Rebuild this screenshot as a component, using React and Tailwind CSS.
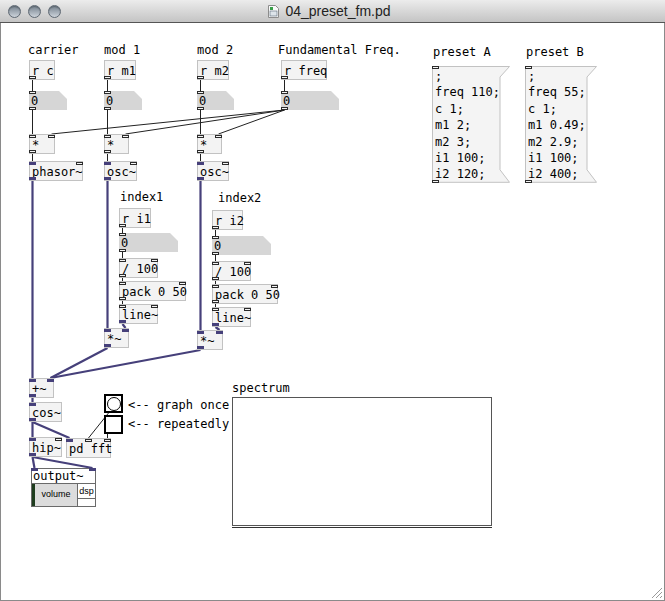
import React from "react";

// Pd patch window: node positions are the content of the canvas, so they come from data
const TOP = 23;
const SIG = "#46407a";

const objects = [
  { x: 29, y: 60, w: 26, t: "r c", ins: [], outs: ["c"] },
  { x: 29, y: 134, w: 26, t: "*", ins: ["c", "c"], outs: ["c"] },
  { x: 29, y: 161, w: 54, t: "phasor~", ins: ["s", "c"], outs: ["s"] },
  { x: 104, y: 60, w: 32, t: "r m1", ins: [], outs: ["c"] },
  { x: 104, y: 134, w: 25, t: "*", ins: ["c", "c"], outs: ["c"] },
  { x: 104, y: 161, w: 33, t: "osc~", ins: ["s", "c"], outs: ["s"] },
  { x: 197, y: 60, w: 32, t: "r m2", ins: [], outs: ["c"] },
  { x: 197, y: 134, w: 25, t: "*", ins: ["c", "c"], outs: ["c"] },
  { x: 197, y: 161, w: 32, t: "osc~", ins: ["s", "c"], outs: ["s"] },
  { x: 281, y: 60, w: 46, t: "r freq", ins: [], outs: ["c"] },
  { x: 119, y: 208, w: 32, t: "r i1", ins: [], outs: ["c"] },
  { x: 119, y: 258, w: 39, t: "/ 100", ins: ["c", "c"], outs: ["c"] },
  { x: 119, y: 281, w: 67, t: "pack 0 50", ins: ["c", "c"], outs: ["c"] },
  { x: 119, y: 304, w: 39, t: "line~", ins: ["c", "c"], outs: ["s"] },
  { x: 104, y: 328, w: 25, t: "*~", ins: ["s", "s"], outs: ["s"] },
  { x: 212, y: 210, w: 31, t: "r i2", ins: [], outs: ["c"] },
  { x: 212, y: 261, w: 39, t: "/ 100", ins: ["c", "c"], outs: ["c"] },
  { x: 212, y: 284, w: 66, t: "pack 0 50", ins: ["c", "c"], outs: ["c"] },
  { x: 212, y: 307, w: 39, t: "line~", ins: ["c", "c"], outs: ["s"] },
  { x: 197, y: 330, w: 26, t: "*~", ins: ["s", "s"], outs: ["s"] },
  { x: 29, y: 378, w: 25, t: "+~", ins: ["s", "s"], outs: ["s"] },
  { x: 29, y: 402, w: 33, t: "cos~", ins: ["s"], outs: ["s"] },
  { x: 29, y: 437, w: 33, t: "hip~", ins: ["s", "c"], outs: ["s"] },
  { x: 66, y: 438, w: 45, t: "pd fft", ins: ["s", "c", "c"], outs: [] },
];

const numbers = [
  { x: 29, y: 91, w: 38 },
  { x: 104, y: 91, w: 38 },
  { x: 197, y: 91, w: 37 },
  { x: 281, y: 91, w: 58 },
  { x: 119, y: 233, w: 59 },
  { x: 212, y: 236, w: 59 },
];

const labels = [
  { x: 28, y: 43, t: "carrier" },
  { x: 104, y: 43, t: "mod 1" },
  { x: 197, y: 43, t: "mod 2" },
  { x: 278, y: 43, t: "Fundamental Freq." },
  { x: 433, y: 45, t: "preset A" },
  { x: 526, y: 45, t: "preset B" },
  { x: 120, y: 190, t: "index1" },
  { x: 218, y: 191, t: "index2" },
  { x: 128, y: 398, t: "<-- graph once" },
  { x: 128, y: 417, t: "<-- repeatedly" },
  { x: 232, y: 381, t: "spectrum" },
];

const presets = [
  { x: 432, y: 66, w: 78, lines: [";", "freq 110;", "c 1;", "m1 2;", "m2 3;", "i1 100;", "i2 120;"] },
  { x: 525, y: 66, w: 72, lines: [";", "freq 55;", "c 1;", "m1 0.49;", "m2 2.9;", "i1 100;", "i2 400;"] },
];

const ctrlWires = [
  [32.5, 80, 32.5, 91], [32.5, 110, 32.5, 134], [32.5, 154, 32.5, 161],
  [107.5, 80, 107.5, 91], [107.5, 110, 107.5, 134], [107.5, 154, 107.5, 161],
  [200.5, 80, 200.5, 91], [200.5, 110, 200.5, 134], [200.5, 154, 200.5, 161],
  [284.5, 80, 284.5, 91],
  [284.5, 110, 51.5, 134], [284.5, 110, 125.5, 134], [284.5, 110, 218.5, 134],
  [122.5, 228, 122.5, 233], [122.5, 252, 122.5, 258], [122.5, 278, 122.5, 281], [122.5, 301, 122.5, 304],
  [215.5, 230, 215.5, 236], [215.5, 255, 215.5, 261], [215.5, 281, 215.5, 284], [215.5, 304, 215.5, 307],
  [108.5, 413, 88.5, 438], [107.5, 434, 107.5, 438],
];

const sigWires = [
  [32.5, 181, 32.5, 378], [107.5, 181, 107.5, 328], [200.5, 181, 200.5, 330],
  [122.5, 324, 125.5, 328], [215.5, 327, 219.5, 330],
  [107.5, 348, 50.5, 378], [200.5, 350, 50.5, 378],
  [32.5, 397, 32.5, 402], [32.5, 422, 32.5, 437], [32.5, 422, 69.5, 438],
  [32.5, 457, 34.5, 468], [32.5, 457, 92.5, 468],
];

const Io = ({ kind, left, bottom }) => (
  <div
    className={
      kind === "s"
        ? "absolute h-[3px] w-[7px] bg-[#46407a]"
        : "absolute h-[3px] w-[7px] border border-[#2b2b2b] bg-[#f4f4f4]"
    }
    style={bottom ? { left, bottom: 0 } : { left, top: 0 }}
  />
);

const spread = (n, w, i) => (n === 1 ? 0 : Math.round((i * (w - 7)) / (n - 1)));

const PdObject = ({ o }) => (
  <div
    className="absolute h-[20px] border border-[#c2c2c2] bg-[#f3f3f3]"
    style={{ left: o.x, top: o.y - TOP, width: o.w }}
  >
    <span className="absolute left-[2px] top-[3px] whitespace-pre text-[12px] leading-[14px] text-black">
      {o.t}
    </span>
    {o.ins.map((k, i) => (
      <Io key={"i" + i} kind={k} left={spread(o.ins.length, o.w, i) - 1} />
    ))}
    {o.outs.map((k, i) => (
      <Io key={"o" + i} kind={k} left={spread(o.outs.length, o.w, i) - 1} bottom />
    ))}
  </div>
);

const NumberBox = ({ n }) => (
  <div className="absolute h-[19px]" style={{ left: n.x, top: n.y - TOP, width: n.w }}>
    <div className="absolute inset-0 bg-[#d6d6d6] [clip-path:polygon(0_0,calc(100%-8px)_0,100%_8px,100%_100%,0_100%)]" />
    <span className="absolute left-[2px] top-[3px] text-[12px] leading-[14px] text-black">0</span>
    <Io kind="c" left={0} />
    <Io kind="c" left={0} bottom />
  </div>
);

const Preset = ({ p }) => {
  const h = p.lines.length * 16.4 + 2;
  return (
    <div className="absolute" style={{ left: p.x, top: p.y - TOP, width: p.w, height: h }}>
      <svg className="absolute inset-0" width={p.w} height={h}>
        <polygon
          points={`0.5,0.5 ${p.w - 0.5},0.5 ${p.w - 10},11 ${p.w - 10},${h - 13} ${p.w - 0.5},${h - 0.5} 0.5,${h - 0.5}`}
          fill="#f4f4f4"
          stroke="#c2c2c2"
        />
      </svg>
      <div className="absolute left-[3px] top-[2px] text-[12px] leading-[16.4px] text-black">
        {p.lines.map((l, i) => (
          <div key={i} className="whitespace-pre">{l}</div>
        ))}
      </div>
      <Io kind="c" left={0} />
      <Io kind="c" left={0} bottom />
    </div>
  );
};

const TitleIcon = () => (
  <svg width="11" height="13" viewBox="0 0 11 13">
    <path d="M0.5 0.5 H7.5 L10.5 3.5 V12.5 H0.5 Z" fill="#fafafa" stroke="#8c8c8c" />
    <rect x="2" y="2" width="3" height="3" fill="#3aa04a" />
    <rect x="2" y="6" width="7" height="5" fill="#dde4ea" stroke="#5a6a7a" strokeWidth="0.6" />
  </svg>
);

const Light = () => (
  <div className="h-[13px] w-[13px] rounded-full border border-[#5e6873] bg-gradient-to-b from-[#76828e] to-[#cdd4db] shadow-[inset_0_1px_1px_rgba(0,0,0,0.25)]" />
);

export default function App() {
  return (
    <div className="flex h-[601px] w-[665px] flex-col overflow-hidden bg-white font-['DejaVu_Sans_Mono','Liberation_Mono',monospace]">
      <div className="relative flex h-[23px] shrink-0 items-center border-b border-[#555] bg-gradient-to-b from-[#ececec] to-[#c4c4c4]">
        <div className="flex gap-[7px] pl-[8px] pt-[1px]">
          <Light />
          <Light />
          <Light />
        </div>
        <div className="absolute inset-0 flex items-center justify-center gap-[6px] pr-[6px]">
          <TitleIcon />
          <span className="font-['Liberation_Sans',Arial,sans-serif] text-[14px] text-[#222]">04_preset_fm.pd</span>
        </div>
      </div>

      <div className="relative flex-1 shadow-[inset_1px_0_0_#8a8a8a,inset_-1px_0_0_#8a8a8a,inset_0_-1px_0_#8a8a8a]">
        <svg className="absolute left-0 top-0" width="665" height="578">
          <g transform={`translate(0,-${TOP})`}>
            {ctrlWires.map((w, i) => (
              <line key={"c" + i} x1={w[0]} y1={w[1]} x2={w[2]} y2={w[3]} stroke="#222" strokeWidth="1" />
            ))}
            {sigWires.map((w, i) => (
              <line key={"s" + i} x1={w[0]} y1={w[1]} x2={w[2]} y2={w[3]} stroke={SIG} strokeWidth="2.2" />
            ))}
            {/* spectrum graph frame */}
            <rect x="232.5" y="397.5" width="259" height="128" fill="#fff" stroke="#555" />
            <line x1="232" y1="527.5" x2="492" y2="527.5" stroke="#333" />
            {/* resize grip */}
            <g stroke="#9a9a9a">
              <line x1="652" y1="598" x2="662" y2="588" />
              <line x1="656" y1="598" x2="662" y2="592" />
              <line x1="660" y1="598" x2="662" y2="596" />
            </g>
          </g>
        </svg>

        {labels.map((l, i) => (
          <span
            key={i}
            className="absolute whitespace-pre text-[12px] leading-[14px] text-black"
            style={{ left: l.x, top: l.y - TOP }}
          >
            {l.t}
          </span>
        ))}

        {numbers.map((n, i) => (
          <NumberBox key={i} n={n} />
        ))}
        {objects.map((o, i) => (
          <PdObject key={i} o={o} />
        ))}
        {presets.map((p, i) => (
          <Preset key={i} p={p} />
        ))}

        {/* bang */}
        <div className="absolute left-[104px] top-[371px] flex h-[19px] w-[19px] items-center justify-center border-2 border-black bg-white">
          <div className="h-[14px] w-[14px] rounded-full border border-black" />
        </div>
        {/* toggle */}
        <div className="absolute left-[104px] top-[392px] h-[19px] w-[19px] border-2 border-black bg-white" />

        {/* output~ abstraction */}
        <div className="absolute left-[31px] top-[445px] flex h-[39px] w-[65px] flex-col border border-[#6a6a6a] bg-white">
          <div className="h-[15px] border-b border-[#6a6a6a] pl-[1px] text-[12px] leading-[15px] text-black">output~</div>
          <div className="flex flex-1">
            <div className="relative flex w-[46px] items-center justify-center border-r border-[#6a6a6a] bg-[#dcdcdc]">
              <div className="absolute bottom-0 left-0 top-0 w-[3px] bg-[#1e3d1e]" />
              <span className="pl-[3px] font-['Liberation_Sans',Arial,sans-serif] text-[9px] text-black">volume</span>
            </div>
            <div className="flex-1">
              <div className="h-[15px] border-b border-[#6a6a6a] text-center font-['Liberation_Sans',Arial,sans-serif] text-[9px] leading-[14px] text-black">dsp</div>
            </div>
          </div>
          <div className="absolute left-[-1px] top-[-1px] h-[3px] w-[7px] bg-[#46407a]" />
          <div className="absolute right-[-1px] top-[-1px] h-[3px] w-[7px] bg-[#46407a]" />
        </div>
      </div>
    </div>
  );
}
